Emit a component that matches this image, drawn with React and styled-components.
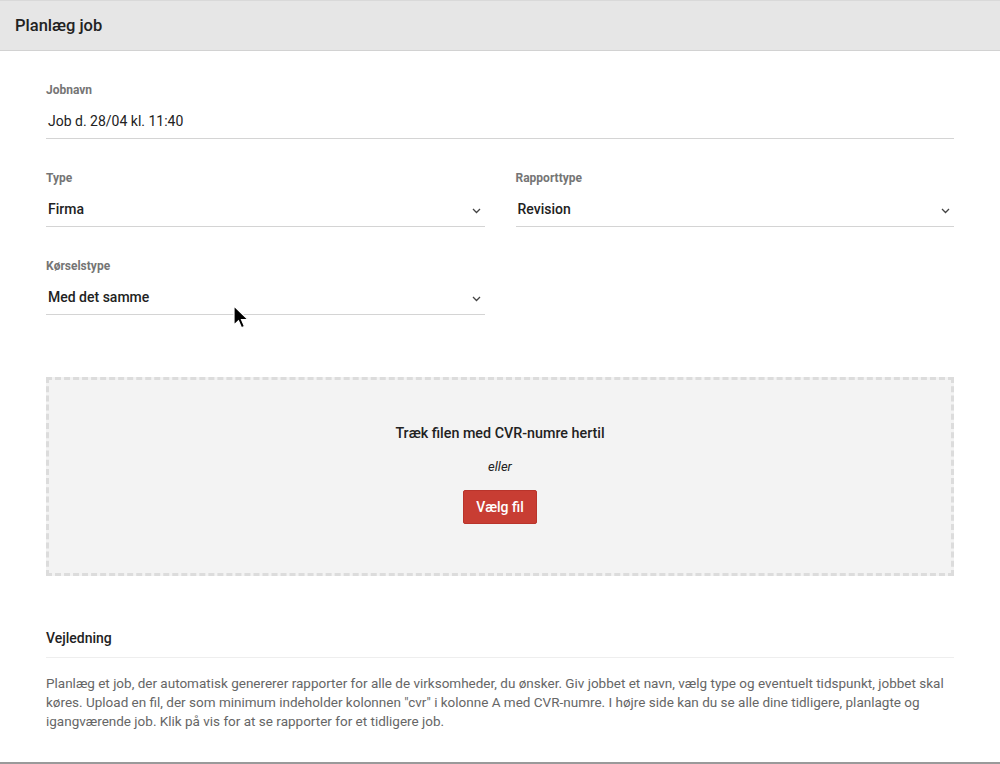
import React from 'react'
import styled, { createGlobalStyle } from 'styled-components'

const GlobalStyle = createGlobalStyle`
  * { box-sizing: border-box; }
  html, body { margin: 0; padding: 0; background: #fff; }
  body {
    font-family: Roboto, "Noto Sans", "Liberation Sans", sans-serif;
    color: #222;
    -webkit-font-smoothing: antialiased;
  }
`

const Page = styled.div`
  position: relative;
  width: 1000px;
  height: 764px;
  background: #fff;
  border-bottom: 2px solid #9a9a9a;
  overflow: hidden;
`

const Header = styled.header`
  height: 51px;
  background: #e6e6e6;
  border-top: 1px solid #d9d9d9;
  border-bottom: 1px solid #d2d2d2;
  display: flex;
  align-items: center;
  padding: 0 15px;
  h1 {
    margin: 0;
    font-size: 16.5px;
    font-weight: 500;
    color: #222;
  }
`

const Content = styled.main`
  padding: 32px 46px 0;
`

const Row = styled.div`
  display: grid;
  grid-template-columns: ${p => (p.$cols === 2 ? '1fr 1fr' : '1fr')};
  column-gap: 31px;
  margin-bottom: ${p => (p.$last ? '0' : '32px')};
`

const HalfRow = styled(Row)`
  grid-template-columns: 1fr 1fr;
`

const Field = styled.div`
  display: flex;
  flex-direction: column;
`

const Label = styled.label`
  font-size: 12px;
  line-height: 14px;
  font-weight: 700;
  color: #757575;
  margin-bottom: 8px;
`

const Control = styled.div`
  height: 34px;
  display: flex;
  align-items: center;
  justify-content: space-between;
  padding: 0 2px 1px;
  border-bottom: 1px solid #d4d4d4;
  font-size: 14px;
  font-weight: ${p => (p.$select ? 500 : 400)};
  color: #222;
  svg { margin-right: 2px; margin-top: 3px; }
`

const Chevron = () => (
  <svg width="9" height="6" viewBox="0 0 9 6" fill="none">
    <path d="M1 1l3.5 3.5L8 1" stroke="#444" strokeWidth="1.3" />
  </svg>
)

const DropZone = styled.section`
  margin-top: 62px;
  height: 199px;
  background: #f3f3f3;
  border: 3px dashed #dcdcdc;
  display: flex;
  flex-direction: column;
  align-items: center;
  justify-content: center;
  padding-bottom: 4px;
  h3 {
    margin: 0;
    font-size: 14.3px;
    font-weight: 500;
    color: #222;
  }
  em {
    display: block;
    margin: 18px 0 16px;
    font-size: 13px;
    color: #222;
  }
`

const Button = styled.button`
  height: 34px;
  padding: 0 12px;
  background: #c83d33;
  color: #fff;
  border: 1px solid #b9342b;
  border-radius: 2px;
  font-family: inherit;
  font-size: 14px;
  font-weight: 500;
`

const Guide = styled.section`
  margin-top: 54px;
  h2 {
    margin: 0;
    font-size: 14px;
    font-weight: 500;
    color: #222;
    padding-bottom: 11px;
    border-bottom: 1px solid #eeeeee;
  }
  p {
    margin: 16px 0 0;
    font-size: 13.5px;
    line-height: 19px;
    color: #666;
  }
`

const Cursor = styled.svg`
  position: absolute;
  left: 233px;
  top: 305px;
`

export default function App() {
  return (
    <Page>
      <GlobalStyle />
      <Header>
        <h1>Planlæg job</h1>
      </Header>
      <Content>
        <Row>
          <Field>
            <Label>Jobnavn</Label>
            <Control>Job d. 28/04 kl. 11:40</Control>
          </Field>
        </Row>
        <Row $cols={2}>
          <Field>
            <Label>Type</Label>
            <Control $select>Firma<Chevron /></Control>
          </Field>
          <Field>
            <Label>Rapporttype</Label>
            <Control $select>Revision<Chevron /></Control>
          </Field>
        </Row>
        <HalfRow $last>
          <Field>
            <Label>Kørselstype</Label>
            <Control $select>Med det samme<Chevron /></Control>
          </Field>
        </HalfRow>
        <DropZone>
          <h3>Træk filen med CVR-numre hertil</h3>
          <em>eller</em>
          <Button>Vælg fil</Button>
        </DropZone>
        <Guide>
          <h2>Vejledning</h2>
          <p>
            Planlæg et job, der automatisk genererer rapporter for alle de virksomheder, du ønsker. Giv jobbet et navn, vælg type og eventuelt tidspunkt, jobbet skal køres. Upload en fil, der som minimum indeholder kolonnen "cvr" i kolonne A med CVR-numre. I højre side kan du se alle dine tidligere, planlagte og igangværende job. Klik på vis for at se rapporter for et tidligere job.
          </p>
        </Guide>
      </Content>
      <Cursor width="16" height="26" viewBox="0 0 16 26">
        <path d="M1 1v19l4.5-4.3 3 7 3-1.3-3-6.8H15z" fill="#000" stroke="#fff" strokeWidth="1.2" />
      </Cursor>
    </Page>
  )
}
